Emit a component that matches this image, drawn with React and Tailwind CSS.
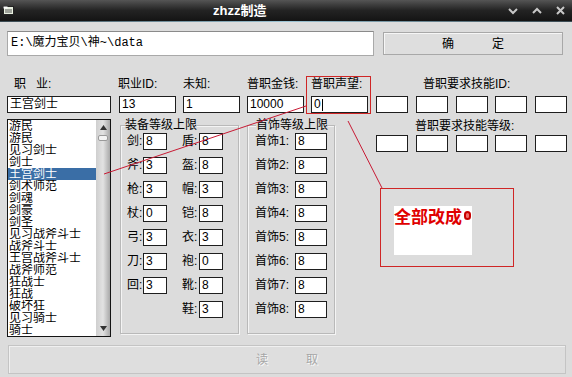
import React from "react";

const jobs = [
  "游民", "游民", "见习剑士", "剑士", "王宫剑士", "剑术师范", "剑魂", "剑豪", "剑圣",
  "见习战斧斗士", "战斧斗士", "王宫战斧斗士", "战斧师范", "狂战士", "狂战", "破坏狂",
  "见习骑士", "骑士",
];

const weapons = [["剑", "8"], ["斧", "3"], ["枪", "3"], ["杖", "0"], ["弓", "3"], ["刀", "3"], ["回", "3"]];
const armors = [["盾", "8"], ["盔", "8"], ["帽", "3"], ["铠", "8"], ["衣", "3"], ["袍", "0"], ["靴", "8"], ["鞋", "3"]];

function Field({ value, className = "", children }) {
  return (
    <div className={`h-[17px] bg-white border border-[#1e1e1e] text-[12px] leading-[15px] pl-[2px] text-black ${className}`}>
      {value}
      {children}
    </div>
  );
}

function Group({ title, className, legendPos, children }) {
  return (
    <div className={`relative mt-[6px] h-[209px] border border-[#b9b9b9] shadow-[inset_1px_1px_0_#f4f4f4,1px_1px_0_#f4f4f4] ${className}`}>
      <span className={`absolute -top-[8px] bg-[#dcdcdc] text-[12px] leading-[14px] ${legendPos}`}>{title}</span>
      {children}
    </div>
  );
}

export default function App() {
  return (
    <div className="relative w-[572px] h-[377px] overflow-hidden bg-[#dcdcdc] text-black font-['Liberation_Sans','Noto_Sans_CJK_SC',sans-serif]">
      {/* title bar */}
      <div className="h-[21px] flex items-center bg-linear-to-b from-[#555] via-[#232323] to-[#141414]">
        <svg width="12" height="11" viewBox="0 0 12 11" className="ml-[3px]">
          <rect x="0.5" y="1.5" width="10" height="8" fill="#e8f0e0" stroke="#222" />
          <rect x="0.5" y="1.5" width="4" height="2" fill="#fff" />
          <line x1="2" y1="5" x2="9" y2="5" stroke="#555" />
          <line x1="2" y1="7" x2="9" y2="7" stroke="#555" />
        </svg>
        <span className="ml-[198px] text-white font-bold text-[13px] leading-[21px]">zhzz制造</span>
        <div className="ml-auto flex items-center gap-[14px] mr-[7px]">
          <svg width="10" height="8" viewBox="0 0 10 8"><path d="M1 2 L5 6 L9 2" fill="none" stroke="#c8c8c8" strokeWidth="2" /></svg>
          <svg width="10" height="8" viewBox="0 0 10 8"><path d="M1 6 L5 2 L9 6" fill="none" stroke="#c8c8c8" strokeWidth="2" /></svg>
          <svg width="9" height="9" viewBox="0 0 9 9"><path d="M1 1 L8 8 M8 1 L1 8" fill="none" stroke="#c8c8c8" strokeWidth="2" /></svg>
        </div>
      </div>
      <div className="h-px bg-linear-to-r from-[#3a4a52] via-[#9cc4d4] to-[#3a4a52]" />

      {/* path row */}
      <div className="flex items-center mt-[9px] ml-[7px] h-[25px]">
        <div className="w-[367px] h-[25px] bg-white border border-[#a9a9a9] border-t-[#8a8a8a] text-[12px] leading-[23px] pl-[3px] font-['Liberation_Mono','Noto_Sans_CJK_SC',monospace]">
          E:\魔力宝贝\神~\data
        </div>
        <div className="ml-[9px] w-[180px] h-[23px] flex items-center justify-center gap-[38px] border border-[#a8a8a8] shadow-[inset_1px_1px_0_#f6f6f6] bg-[#dedede] text-[12px]">
          <span>确</span>
          <span>定</span>
        </div>
      </div>

      {/* label + field rows */}
      <div className="flex mt-[21px] ml-[7px]">
        <div className="w-[104px]">
          <div className="h-[14px] leading-[14px] text-[12px] ml-[7px]">职&nbsp;&nbsp;&nbsp;业:</div>
          <Field value="王宫剑士" className="mt-[5px]" />
        </div>
        <div className="w-[57px] ml-[8px]">
          <div className="h-[14px] leading-[14px] text-[12px] -ml-px">职业ID:</div>
          <Field value="13" className="mt-[5px]" />
        </div>
        <div className="w-[57px] ml-[7px]">
          <div className="h-[14px] leading-[14px] text-[12px]">未知:</div>
          <Field value="1" className="mt-[5px]" />
        </div>
        <div className="w-[57px] ml-[7px]">
          <div className="h-[14px] leading-[14px] text-[12px]">普职金钱:</div>
          <Field value="10000" className="mt-[5px]" />
        </div>
        <div className="w-[57px] ml-[7px]">
          <div className="h-[14px] leading-[14px] text-[12px]">普职声望:</div>
          <Field value="0" className="mt-[5px] flex items-center">
            <span className="inline-block w-px h-[12px] bg-black ml-px" />
          </Field>
        </div>
        <div className="ml-[8px]">
          <div className="h-[14px] leading-[14px] text-[12px] ml-[47px]">普职要求技能ID:</div>
          <div className="flex gap-[7.75px] mt-[5px]">
            {[0, 1, 2, 3, 4].map((i) => (
              <Field key={i} className="w-[32px]" />
            ))}
          </div>
        </div>
      </div>

      {/* main row */}
      <div className="flex mt-[6px] ml-[7px]">
        {/* list box */}
        <div className="w-[104px] h-[218px] border border-[#141414] bg-white flex overflow-hidden">
          <div className="flex-1 overflow-hidden">
            {jobs.map((j, i) => (
              <div
                key={i}
                className={`h-[12px] leading-[12px] text-[12px] pl-px whitespace-nowrap overflow-hidden ${i === 4 ? "bg-[#3a6ea6] text-white" : "text-black"}`}
              >
                {j}
              </div>
            ))}
          </div>
          <div className="w-[14px] h-full flex flex-col items-center bg-linear-to-r from-[#cfcfcf] via-[#e2e2e2] to-[#a9a9a9]">
            <svg width="7" height="5" viewBox="0 0 7 5" className="mt-[5px]"><path d="M0 5 L3.5 0 L7 5 Z" fill="#333" /></svg>
            <div className="mt-[5px] w-[10px] h-[6px] rounded-[2px] bg-[#f4f4f4] border border-[#9a9a9a]" />
            <svg width="7" height="5" viewBox="0 0 7 5" className="mt-auto mb-[5px]"><path d="M0 0 L3.5 5 L7 0 Z" fill="#333" /></svg>
          </div>
        </div>

        {/* equipment group */}
        <Group title="装备等级上限" className="ml-[9px] w-[119px]" legendPos="left-[4px]">
          <div className="flex pt-[7px] pl-[6px] text-[12px]">
            <div className="flex flex-col gap-[7px]">
              {weapons.map(([k, v]) => (
                <div key={k} className="flex items-center h-[17px]">
                  <span className="w-[16px] leading-[17px]">{k}:</span>
                  <Field value={v} className="w-[24px]" />
                </div>
              ))}
            </div>
            <div className="flex flex-col gap-[7px] ml-[15px]">
              {armors.map(([k, v]) => (
                <div key={k} className="flex items-center h-[17px]">
                  <span className="w-[17px] leading-[17px]">{k}:</span>
                  <Field value={v} className="w-[24px]" />
                </div>
              ))}
            </div>
          </div>
        </Group>

        {/* accessory group */}
        <Group title="首饰等级上限" className="ml-[8px] w-[88px]" legendPos="left-[8px]">
          <div className="flex flex-col gap-[7px] pt-[7px] pl-[7px] text-[12px]">
            {[1, 2, 3, 4, 5, 6, 7, 8].map((n) => (
              <div key={n} className="flex items-center h-[17px]">
                <span className="w-[40px] leading-[17px]">首饰{n}:</span>
                <Field value="8" className="w-[32px]" />
              </div>
            ))}
          </div>
        </Group>

        {/* skill level */}
        <div className="ml-[41px]">
          <div className="h-[14px] leading-[14px] text-[12px] ml-[39px]">普职要求技能等级:</div>
          <div className="flex gap-[7.75px] mt-[2px]">
            {[0, 1, 2, 3, 4].map((i) => (
              <Field key={i} className="w-[32px]" />
            ))}
          </div>
        </div>
      </div>

      {/* bottom disabled button */}
      <div className="mt-[8px] ml-[8px] w-[558px] h-[29px] flex items-center justify-center gap-[38px] border border-[#c4c4c4] shadow-[inset_1px_1px_0_#f0f0f0] bg-[#dedede] text-[12px] text-[#a6a6a6] [text-shadow:1px_1px_0_#fafafa]">
        <span>读</span>
        <span>取</span>
      </div>

      {/* annotations */}
      <svg className="absolute inset-0 pointer-events-none" width="572" height="377">
        <rect x="306.5" y="76.5" width="64" height="37" fill="none" stroke="#cf2626" />
        <line x1="104" y1="174" x2="306" y2="106" stroke="#c81a34" />
        <line x1="348" y1="121" x2="382" y2="188" stroke="#c81a34" />
        <rect x="380.5" y="188.5" width="133" height="78" fill="none" stroke="#cf2626" />
      </svg>
      <div className="absolute left-[394px] top-[206px] w-[78px] h-[49px] bg-white flex items-start">
        <span className="text-[17px] leading-[20px] font-bold text-[#e00000] font-['Noto_Sans_CJK_SC',sans-serif]">全部改成</span>
        <span className="ml-[2px] mt-[5px] w-[7px] h-[9px] rounded-full border-2 border-[#c80000] bg-[#f07070]" />
      </div>
    </div>
  );
}
